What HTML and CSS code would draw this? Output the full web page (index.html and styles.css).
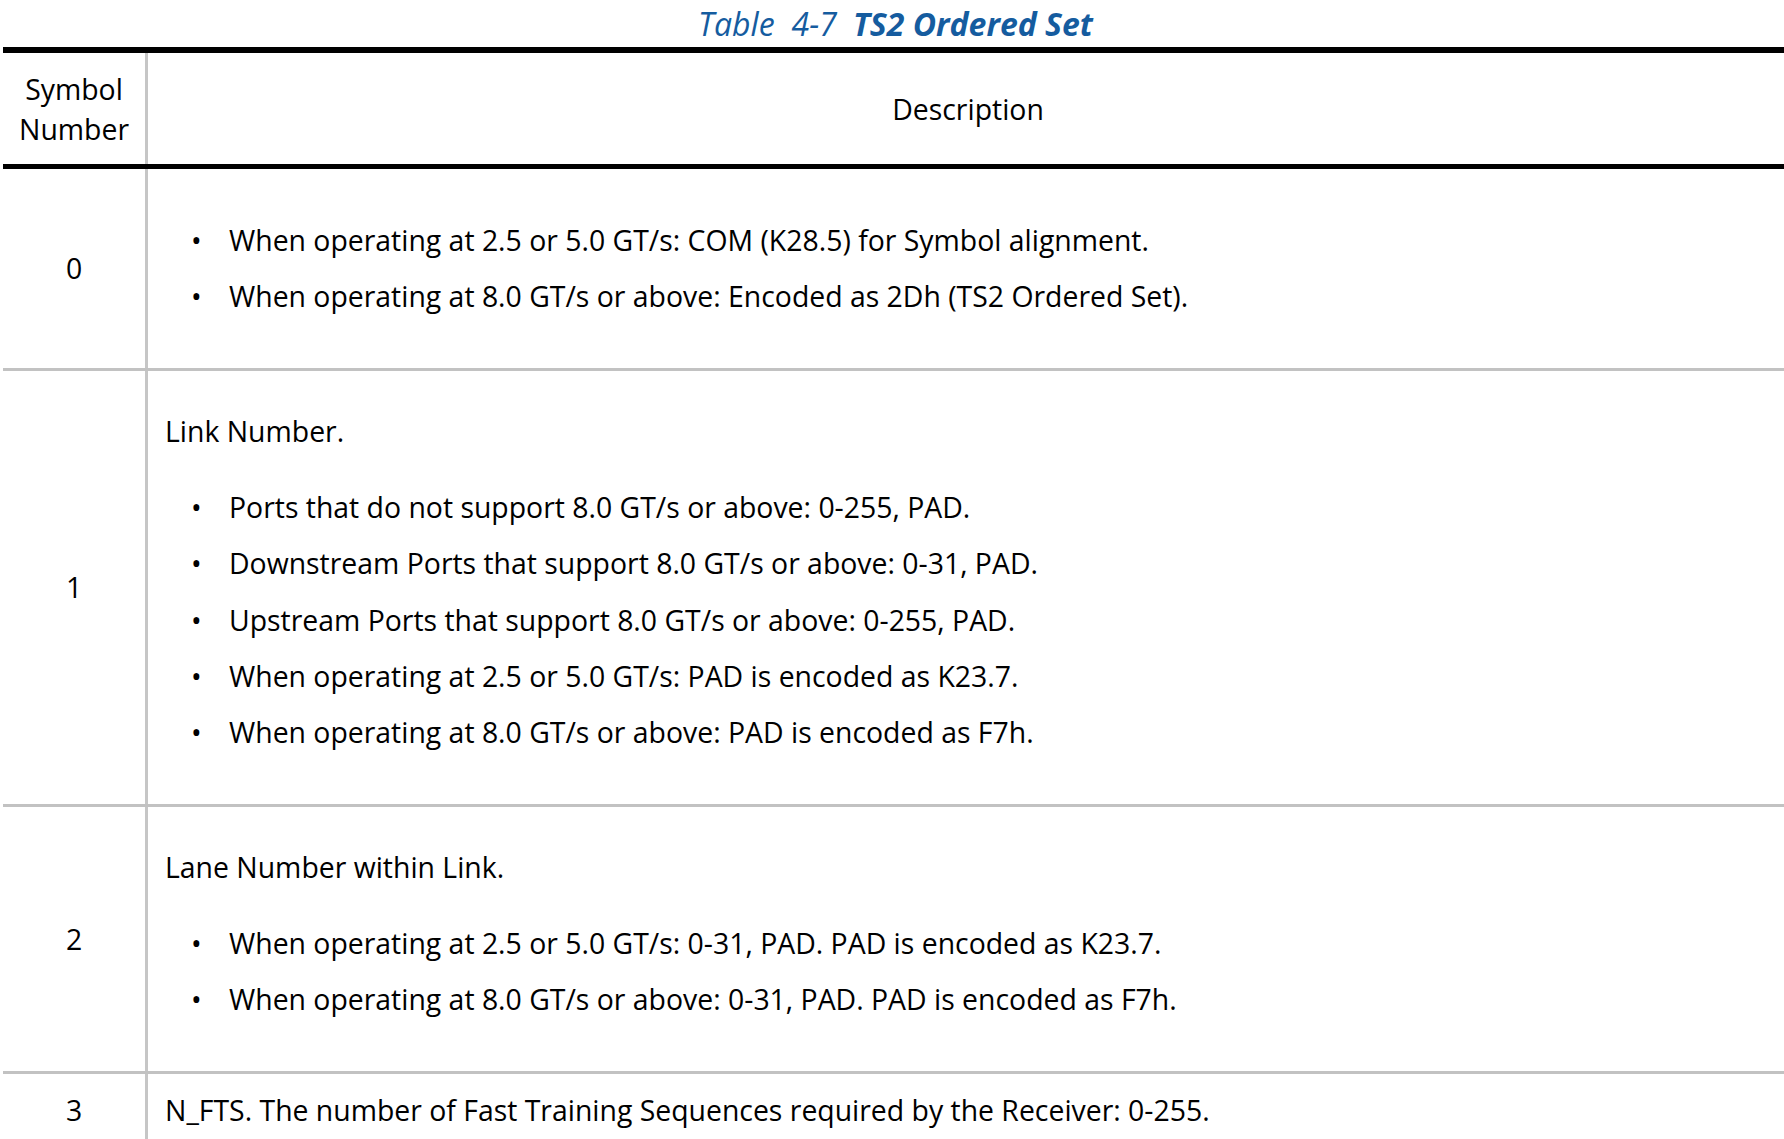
FILE: index.html
```html
<!DOCTYPE html>
<html lang="en">
<head>
<meta charset="utf-8">
<title>Table 4-7 TS2 Ordered Set</title>
<link rel="stylesheet" href="styles.css">
</head>
<body>
<div class="wrap">
  <table class="ts">
    <caption class="cap"><span class="cap-label">Table</span><span class="cap-num">4-7</span><span class="cap-title">TS2 Ordered Set</span></caption>
    <thead>
      <tr>
        <th class="num">Symbol<br>Number</th>
        <th class="desc head-desc">Description</th>
      </tr>
    </thead>
    <tbody>
      <tr>
        <td class="num">0</td>
        <td class="desc">
          <ul class="list">
            <li>When operating at 2.5 or 5.0 GT/s: COM (K28.5) for Symbol alignment.</li>
            <li>When operating at 8.0 GT/s or above: Encoded as 2Dh (TS2 Ordered Set).</li>
          </ul>
        </td>
      </tr>
      <tr>
        <td class="num">1</td>
        <td class="desc">
          <p class="lead">Link Number.</p>
          <ul class="list">
            <li>Ports that do not support 8.0 GT/s or above: 0-255, PAD.</li>
            <li>Downstream Ports that support 8.0 GT/s or above: 0-31, PAD.</li>
            <li>Upstream Ports that support 8.0 GT/s or above: 0-255, PAD.</li>
            <li>When operating at 2.5 or 5.0 GT/s: PAD is encoded as K23.7.</li>
            <li>When operating at 8.0 GT/s or above: PAD is encoded as F7h.</li>
          </ul>
        </td>
      </tr>
      <tr>
        <td class="num">2</td>
        <td class="desc">
          <p class="lead">Lane Number within Link.</p>
          <ul class="list">
            <li>When operating at 2.5 or 5.0 GT/s: 0-31, PAD. PAD is encoded as K23.7.</li>
            <li>When operating at 8.0 GT/s or above: 0-31, PAD. PAD is encoded as F7h.</li>
          </ul>
        </td>
      </tr>
      <tr class="last">
        <td class="num">3</td>
        <td class="desc">
          <p class="single">N_FTS. The number of Fast Training Sequences required by the Receiver: 0-255.</p>
        </td>
      </tr>
    </tbody>
  </table>
</div>
</body>
</html>
```
FILE: styles.css
```css
html, body {
  margin: 0;
  padding: 0;
  background: #fff;
  overflow: hidden;
}

body {
  font-family: "Open Sans", "Noto Sans", "Liberation Sans", sans-serif;
  font-size: 28.4px;
  color: #000;
}

.wrap {
  padding-left: 3px;
  width: 1781px;
  overflow: hidden;
}

.ts {
  width: 1785px;
  border-collapse: separate;
  border-spacing: 0;
  table-layout: fixed;
}

.cap {
  caption-side: top;
  height: 47px;
  line-height: 47px;
  text-align: center;
  font-style: italic;
  font-size: 32px;
  color: #155c9f;
  white-space: nowrap;
}

.cap-label {
  font-weight: 400;
}

.cap-num {
  font-weight: 400;
  margin-left: 17px;
}

.cap-title {
  font-weight: 700;
  margin-left: 16px;
}

th {
  font-weight: 400;
  line-height: 40px;
  padding: 15.5px 0;
  border-top: 6px solid #000;
  border-bottom: 5px solid #000;
  vertical-align: middle;
}

td {
  padding: 0;
  border-bottom: 3px solid #c2c2c2;
  vertical-align: middle;
  line-height: 40px;
}

.last td {
  border-bottom: 0;
  vertical-align: top;
}

.num {
  width: 142px;
  padding-right: 3px;
  text-align: center;
  box-shadow: inset -3px 0 0 #c6c6c6;
}

th.num {
  padding-right: 3px;
}

.last .num {
  padding-top: 16.5px;
}

.desc {
  text-align: left;
  padding-left: 17px;
  padding-right: 0;
}

.head-desc {
  text-align: center;
  padding-left: 0;
}

.lead {
  margin: 40px 0 0;
  line-height: 40px;
  white-space: nowrap;
}

.single {
  margin: 16.5px 0 40px;
  line-height: 40px;
  white-space: nowrap;
}

.list {
  list-style: none;
  margin: 43px 0;
  padding: 0;
}

.lead + .list {
  margin-top: 28px;
}

.list li {
  display: flex;
  line-height: 56.4px;
  white-space: nowrap;
}

.list li::before {
  content: "\2022";
  flex: 0 0 64px;
  box-sizing: border-box;
  padding-left: 26px;
}
```
